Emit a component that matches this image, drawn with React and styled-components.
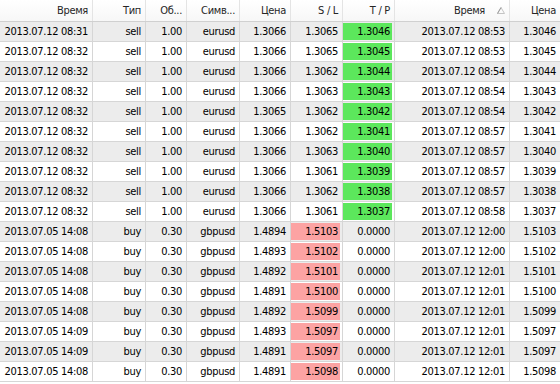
import React from 'react';
import styled, { createGlobalStyle } from 'styled-components';

const GlobalStyle = createGlobalStyle`
    html, body {
	margin: 0;
	padding: 0;
	background: #ffffff;
	overflow: hidden;
    }
`;

const COLS = '93px 53px 41px 53px 51px 52px 52px 115px 51px';

const Grid = styled.div`
    width: 560px;
    height: 384px;
    overflow: hidden;
    background: #ffffff;
    font-family: "DejaVu Sans Condensed", "DejaVu Sans", sans-serif;
    font-size: 11px;
    letter-spacing: -0.3px;
    color: #000000;
`;

const HeaderRow = styled.div`
    display: grid;
    grid-template-columns: ${COLS};
    width: 561px;
    height: 22px;
    box-sizing: border-box;
    border-bottom: 1px solid #d0d0d0;
    background: linear-gradient(#ffffff, #f7f7f7);
`;

const HeaderCell = styled.div`
    display: flex;
    align-items: center;
    justify-content: flex-end;
    gap: 12px;
    box-sizing: border-box;
    padding-right: 4px;
    border-right: 1px solid #e4e4e4;
    color: #262626;
    white-space: nowrap;
    overflow: hidden;
`;

const Row = styled.div`
    display: grid;
    grid-template-columns: ${COLS};
    width: 561px;
    height: 20px;
    box-sizing: border-box;
    border-bottom: 1px solid #d6d6d6;
    background: ${props => props.odd ? '#ffffff' : '#ececec'};
`;

const Cell = styled.div`
    display: flex;
    align-items: center;
    justify-content: flex-end;
    box-sizing: border-box;
    padding: ${props => props.mark ? '1px 2px 1px 0' : '0 4px 0 0'};
    border-right: 1px solid #d6d6d6;
    white-space: nowrap;
    overflow: hidden;
`;

const Mark = styled.span`
    display: flex;
    align-items: center;
    justify-content: flex-end;
    width: 100%;
    height: 100%;
    padding-right: 2px;
    box-sizing: border-box;
    background: ${props => props.kind === 'tp' ? '#5ce75c' : '#fca3a3'};
`;

const SortArrow = () => (
    <svg width="8" height="7" viewBox="0 0 8 7">
	<path d="M4 0.5 L7.5 6.5 L0.5 6.5 Z" fill="none" stroke="#c4c4c4" strokeWidth="1" />
	<path d="M4 0.5 L0.5 6.5" stroke="#9a9a9a" strokeWidth="1" />
    </svg>
);

const sells = [
    ['08:31', '1.3066', '1.3065', '1.3046', '08:53'],
    ['08:32', '1.3066', '1.3065', '1.3045', '08:53'],
    ['08:32', '1.3066', '1.3062', '1.3044', '08:54'],
    ['08:32', '1.3066', '1.3063', '1.3043', '08:54'],
    ['08:32', '1.3065', '1.3062', '1.3042', '08:54'],
    ['08:32', '1.3066', '1.3062', '1.3041', '08:57'],
    ['08:32', '1.3066', '1.3063', '1.3040', '08:57'],
    ['08:32', '1.3066', '1.3061', '1.3039', '08:57'],
    ['08:32', '1.3066', '1.3062', '1.3038', '08:57'],
    ['08:32', '1.3066', '1.3061', '1.3037', '08:58'],
];

const buys = [
    ['14:08', '1.4894', '1.5103', '12:00'],
    ['14:08', '1.4893', '1.5102', '12:00'],
    ['14:08', '1.4892', '1.5101', '12:01'],
    ['14:08', '1.4891', '1.5100', '12:01'],
    ['14:08', '1.4892', '1.5099', '12:01'],
    ['14:09', '1.4893', '1.5097', '12:01'],
    ['14:09', '1.4891', '1.5097', '12:01'],
    ['14:08', '1.4891', '1.5098', '12:01'],
];

const rows = [
    ...sells.map(([t, p, sl, tp, ct]) => ({
	open: '2013.07.12 ' + t, type: 'sell', lots: '1.00', sym: 'eurusd',
	price: p, sl, tp, hit: 'tp', close: '2013.07.12 ' + ct, cprice: tp,
    })),
    ...buys.map(([t, p, sl, ct]) => ({
	open: '2013.07.05 ' + t, type: 'buy', lots: '0.30', sym: 'gbpusd',
	price: p, sl, tp: '0.0000', hit: 'sl', close: '2013.07.12 ' + ct, cprice: sl,
    })),
];

export default function App() {
    return (
	<Grid>
	    <GlobalStyle />
	    <HeaderRow>
		<HeaderCell>Время</HeaderCell>
		<HeaderCell>Тип</HeaderCell>
		<HeaderCell>Об...</HeaderCell>
		<HeaderCell>Симв...</HeaderCell>
		<HeaderCell>Цена</HeaderCell>
		<HeaderCell>S / L</HeaderCell>
		<HeaderCell>T / P</HeaderCell>
		<HeaderCell>Время <SortArrow /></HeaderCell>
		<HeaderCell>Цена</HeaderCell>
	    </HeaderRow>
	    {rows.map((r, i) => (
		<Row key={i} odd={i % 2 === 1}>
		    <Cell>{r.open}</Cell>
		    <Cell>{r.type}</Cell>
		    <Cell>{r.lots}</Cell>
		    <Cell>{r.sym}</Cell>
		    <Cell>{r.price}</Cell>
		    {r.hit === 'sl'
			? <Cell mark><Mark kind="sl">{r.sl}</Mark></Cell>
			: <Cell>{r.sl}</Cell>}
		    {r.hit === 'tp'
			? <Cell mark><Mark kind="tp">{r.tp}</Mark></Cell>
			: <Cell>{r.tp}</Cell>}
		    <Cell>{r.close}</Cell>
		    <Cell>{r.cprice}</Cell>
		</Row>
	    ))}
	</Grid>
    );
}
